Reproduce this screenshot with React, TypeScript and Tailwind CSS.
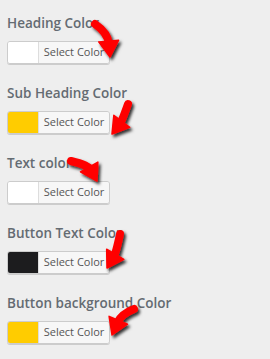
import React from 'react';

const fields = [
  { label: 'Heading Color', swatch: 'bg-white' },
  { label: 'Sub Heading Color', swatch: 'bg-[#ffcc00]' },
  { label: 'Text color', swatch: 'bg-white' },
  { label: 'Button Text Color', swatch: 'bg-[#1c1c1e]' },
  { label: 'Button background Color', swatch: 'bg-[#ffcc00]' },
];

// tail point, control point, tip point
const arrows: [number, number, number, number, number, number][] = [
  [95, 24, 108, 33, 110, 57],
  [128, 104, 122, 121, 112, 134],
  [71, 161, 88, 165, 97, 181],
  [120, 234, 116, 253, 107, 268],
  [134, 309, 121, 314, 112, 335],
];

function arrowParts(a: [number, number, number, number, number, number]) {
  const [tx, ty, cx, cy, hx, hy] = a;
  let dx = hx - cx;
  let dy = hy - cy;
  const len = Math.hypot(dx, dy) || 1;
  dx /= len;
  dy /= len;
  const nx = -dy;
  const ny = dx;
  const headLen = 16;
  const half = 10;
  const bx = hx - dx * headLen;
  const by = hy - dy * headLen;
  const head = `M${hx},${hy} L${bx + nx * half},${by + ny * half} L${bx - nx * half},${by - ny * half} Z`;
  const shaft = `M${tx},${ty} Q${cx},${cy} ${bx + dx * 3},${by + dy * 3}`;
  return { head, shaft };
}

export default function App() {
  return (
    <div className="relative w-[270px] h-[359px] bg-[#eeeeee] overflow-hidden" style={{ fontFamily: '"Open Sans", "Liberation Sans", sans-serif' }}>
      <div className="flex flex-col pt-[13px] pl-[7px]">
        {fields.map((f, i) => (
          <div key={i} className="h-[70px] flex flex-col">
            <div className="h-[20px] leading-[20px] text-[13.5px] font-semibold text-[#646b72] whitespace-nowrap">{f.label}</div>
            <div className="mt-[8px] flex w-[103px] h-[23px] rounded-[3px] border border-[#cccccc] overflow-hidden shadow-[0_1px_0_#cccccc]">
              <div className={`w-[31px] h-full border-r border-[#dddddd] ${f.swatch}`} />
              <div className="flex-1 flex items-center justify-center bg-[#f7f7f7] text-[11px] text-[#555555]">Select Color</div>
            </div>
          </div>
        ))}
      </div>

      {/* red annotation arrows */}
      <svg className="absolute inset-0 pointer-events-none" width="270" height="359" viewBox="0 0 270 359">
        <defs>
          <filter id="sh" x="-50%" y="-50%" width="200%" height="200%">
            <feDropShadow dx="2" dy="2.5" stdDeviation="1.8" floodColor="#000" floodOpacity="0.8" />
          </filter>
        </defs>
        {arrows.map((a, i) => {
          const p = arrowParts(a);
          return (
            <g key={i} filter="url(#sh)">
              <path d={p.shaft} fill="none" stroke="#ff0000" strokeWidth="8" strokeLinecap="round" />
              <path d={p.head} fill="#ff0000" stroke="#ff0000" strokeWidth="1.5" strokeLinejoin="round" />
            </g>
          );
        })}
      </svg>
    </div>
  );
}
